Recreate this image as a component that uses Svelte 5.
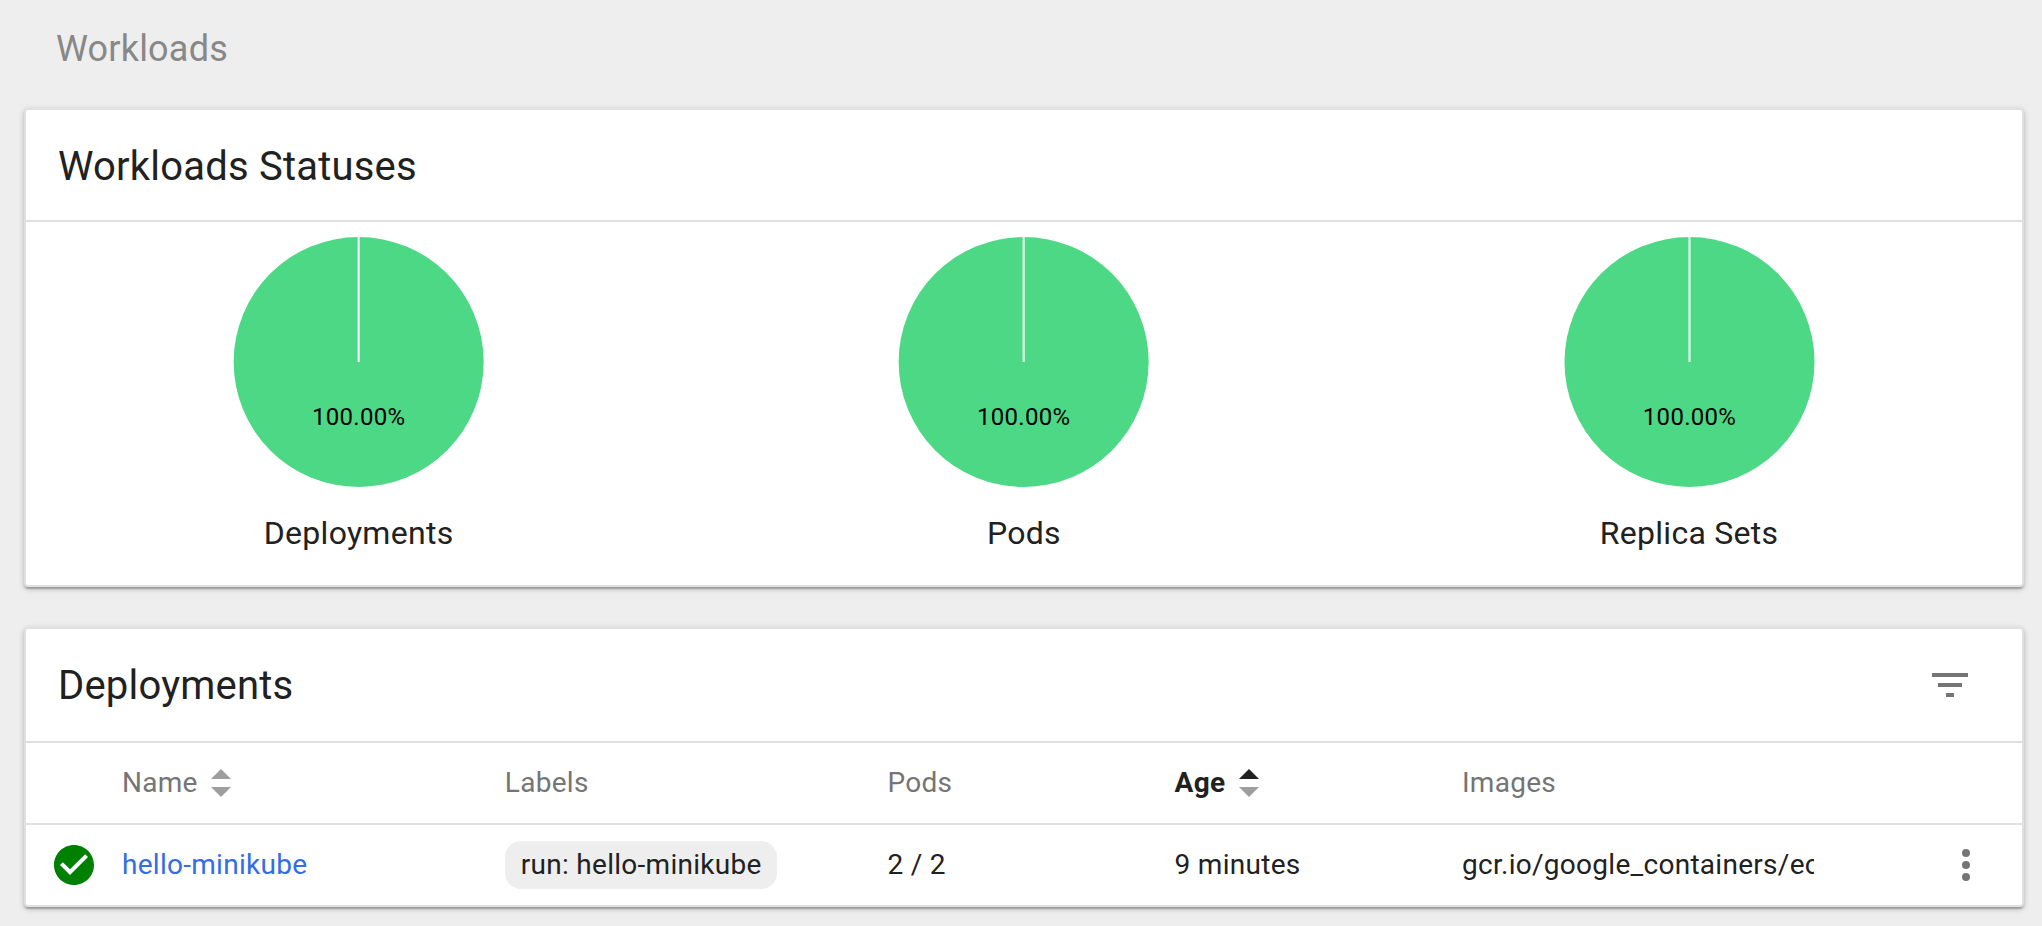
<script>
  const charts = [
    { name: 'Deployments', value: '100.00%' },
    { name: 'Pods', value: '100.00%' },
    { name: 'Replica Sets', value: '100.00%' }
  ];
  const columns = [
    { title: 'Name', sortable: true, active: false },
    { title: 'Labels', sortable: false, active: false },
    { title: 'Pods', sortable: false, active: false },
    { title: 'Age', sortable: true, active: true },
    { title: 'Images', sortable: false, active: false }
  ];
  const deployments = [
    {
      name: 'hello-minikube',
      label: 'run: hello-minikube',
      pods: '2 / 2',
      age: '9 minutes',
      image: 'gcr.io/google_containers/echoserver:1.4'
    }
  ];
</script>

<main>
  <h1>Workloads</h1>

  <section class="card">
    <header class="statuses"><h2>Workloads Statuses</h2></header>
    <div class="charts">
      {#each charts as chart}
        <figure>
          <svg class="pie" height="252">
            <svg x="50%" y="126" overflow="visible">
              <circle r="125" fill="#4dd886" />
              <path d="M0 0V-126" stroke="#fff" stroke-width="2" />
              <text y="63" text-anchor="middle">{chart.value}</text>
            </svg>
          </svg>
          <figcaption>{chart.name}</figcaption>
        </figure>
      {/each}
    </div>
  </section>

  <section class="card">
    <header>
      <h2>Deployments</h2>
      <svg class="filter" width="48" height="48" viewBox="0 0 24 24">
        <path d="M10 18h4v-2h-4v2zM3 6v2h18V6H3zm3 7h12v-2H6v2z" />
      </svg>
    </header>
    <div class="row head">
      <span></span>
      {#each columns as col}
        <div class="cell" class:active={col.active}>
          <span>{col.title}</span>
          {#if col.sortable}
            <svg class="sort" width="20" height="28" viewBox="0 0 20 28">
              <path class="up" d="M0 10L10 0l10 10z" />
              <path d="M0 18h20L10 28z" />
            </svg>
          {/if}
        </div>
      {/each}
      <span></span>
    </div>
    {#each deployments as item}
      <div class="row">
        <svg class="status" width="48" height="48" viewBox="0 0 24 24">
          <path d="M12 2C6.480 2 2 6.480 2 12s4.480 10 10 10 10-4.480 10-10S17.520 2 12 2zm-2 15l-5-5 1.410-1.410L10 14.170l7.590-7.590L19 8l-9 9z" />
        </svg>
        <div class="cell"><a href="#hello-minikube">{item.name}</a></div>
        <div class="cell"><span class="chip">{item.label}</span></div>
        <div class="cell">{item.pods}</div>
        <div class="cell">{item.age}</div>
        <div class="cell image">{item.image}</div>
        <svg class="more" width="48" height="48" viewBox="0 0 24 24">
          <circle cx="12" cy="6" r="2" /><circle cx="12" cy="12" r="2" /><circle cx="12" cy="18" r="2" />
        </svg>
      </div>
    {/each}
  </section>
</main>

<style>
  :global(body) {
    margin: 0;
    background: #eee;
  }
  main {
    box-sizing: border-box;
    height: 926px;
    padding: 0 18px 0 24px;
    overflow: hidden;
    font-family: Roboto, sans-serif;
    font-size: 28px;
    letter-spacing: 0.01em;
    color: #212121;
  }
  h1 {
    margin: 0;
    height: 108px;
    box-sizing: border-box;
    padding: 24px 0 0 32px;
    font-size: 36px;
    line-height: 50px;
    font-weight: 400;
    letter-spacing: 0.2px;
    color: #888;
  }
  .card {
    box-sizing: border-box;
    margin-bottom: 40px;
    background: #fff;
    border: 2px solid #e0e0e0;
    border-radius: 4px;
    box-shadow: 0 2px 6px rgba(0, 0, 0, 0.2), 0 2px 2px rgba(0, 0, 0, 0.14), 0 4px 2px -2px rgba(0, 0, 0, 0.12);
  }
  header {
    display: flex;
    align-items: center;
    justify-content: space-between;
    height: 112px;
    padding: 0 48px 0 32px;
    border-bottom: 2px solid #e0e0e0;
  }
  header.statuses {
    height: 110px;
  }
  h2 {
    margin: 0;
    padding-top: 2px;
    font-size: 40px;
    line-height: 48px;
    font-weight: 400;
    letter-spacing: 0.2px;
  }
  header.statuses h2 {
    padding-top: 4px;
  }
  .charts {
    display: grid;
    grid-template-columns: 665.3px 665.3px 665px;
    height: 363px;
  }
  figure {
    display: flex;
    flex-direction: column;
    align-items: center;
    margin: 0;
    padding-top: 14px;
  }
  .pie {
    width: 100%;
  }
  .pie text {
    font-size: 24px;
    fill: #000;
  }
  figcaption {
    margin-top: 25px;
    font-size: 32px;
    line-height: 40px;
  }
  .filter,
  .more {
    fill: #757575;
  }
  .row {
    display: grid;
    grid-template-columns: 96px 382.8px 382.6px 287.2px 287.4px 352px 208px;
    align-items: center;
    height: 80px;
    line-height: 40px;
  }
  .head {
    border-bottom: 2px solid #e0e0e0;
    color: #757575;
  }
  .cell {
    display: flex;
    align-items: center;
    white-space: nowrap;
    min-width: 0;
  }
  .sort {
    margin-left: 13.5px;
    fill: #9e9e9e;
  }
  .active {
    color: #212121;
    font-weight: 700;
  }
  .active .up {
    fill: #212121;
  }
  .status {
    margin-left: 24px;
    fill: #008000;
  }
  a {
    color: #326de6;
    text-decoration: none;
  }
  .chip {
    padding: 4px 15.5px 4px 16px;
    border-radius: 16px;
    background: #eee;
  }
  .image {
    display: block;
    overflow: hidden;
  }
  .more {
    justify-self: end;
    margin-right: 32px;
  }
</style>
